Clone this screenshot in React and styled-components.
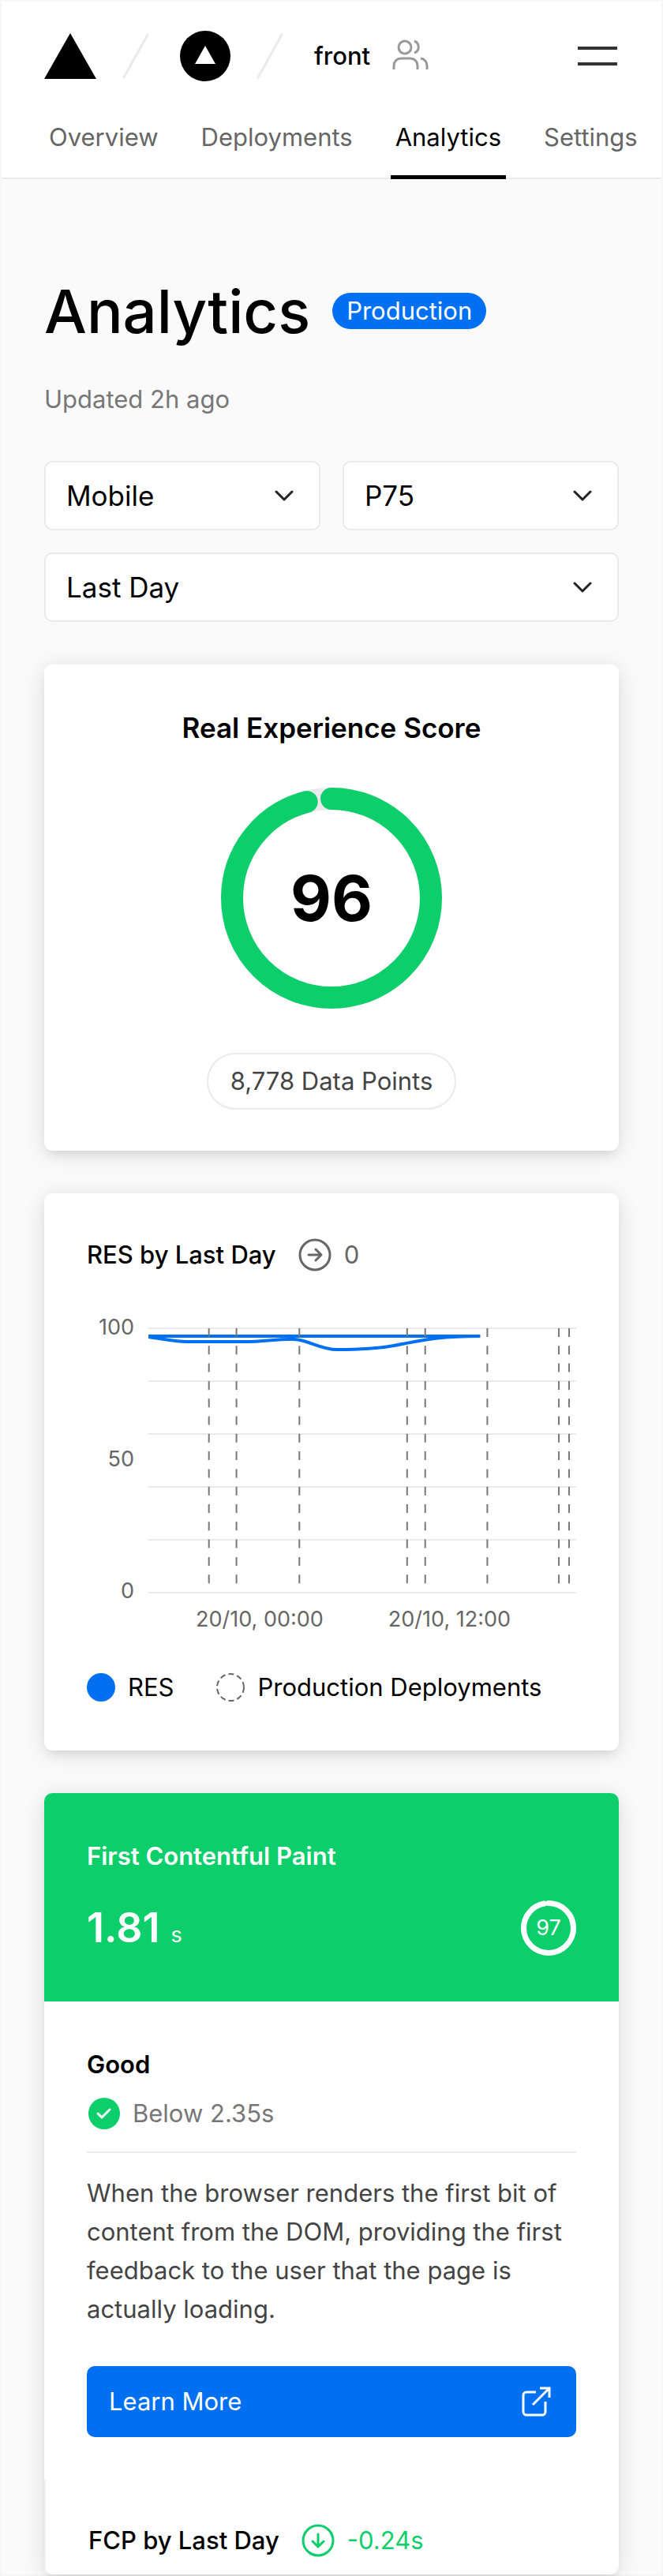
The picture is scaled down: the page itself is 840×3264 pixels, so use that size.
import React from "react";
import styled, { createGlobalStyle } from "styled-components";

const colors = {
  ink: "#000",
  text: "#444",
  muted: "#777",
  line: "#eaeaea",
  canvas: "#fafafa",
  blue: "#0070f3",
  green: "#0cce6b",
};

const GlobalStyle = createGlobalStyle`
  *, *::before, *::after { box-sizing: border-box; }
  body {
    margin: 0;
    background: ${colors.canvas};
    color: ${colors.ink};
    font-family: Inter, "Liberation Sans", sans-serif;
    font-size: 31px;
    line-height: 40px;
  }
  h1, h2, h3, p { margin: 0; font-size: inherit; font-weight: inherit; }
  svg { display: block; flex: none; }
`;

const Page = styled.div`
  border: 2px solid #f6f6f6;
  background: ${colors.canvas};
`;

const Header = styled.header`
  background: #fff;
`;

const Bar = styled.div`
  display: flex;
  align-items: center;
  height: 138px;
  padding: 0 56px 0 54px;
`;

const Crumb = styled.a`
  display: flex;
  align-items: center;
  gap: 28px;
  color: inherit;
  font-weight: 500;
  text-decoration: none;
`;

const Slash = styled.svg`
  margin: 0 38px 0 32px;
`;

const MenuButton = styled.button`
  display: flex;
  flex-direction: column;
  gap: 16px;
  width: 50px;
  margin-left: auto;
  padding: 0;
  border: 0;
  background: none;

  span {
    height: 4px;
    background: #333;
  }
`;

const Tabs = styled.nav`
  display: flex;
  gap: 42px;
  padding: 0 54px;
  overflow: hidden;
  box-shadow: inset 0 -2px ${colors.line};
`;

const Tab = styled.a`
  flex: none;
  padding: 14px 6px 28px;
  border-bottom: 5px solid ${(p) => (p.$active ? colors.ink : "transparent")};
  color: ${(p) => (p.$active ? colors.ink : "#666")};
  text-decoration: none;
`;

const Main = styled.main`
  padding: 111px 54px 0;
`;

const TitleRow = styled.div`
  display: flex;
  align-items: center;
  gap: 28px;
`;

const Title = styled.h1`
  font-size: 76px;
  font-weight: 500;
  line-height: 112px;
`;

const Badge = styled.span`
  padding: 0 18px;
  border-radius: 24px;
  background: ${colors.blue};
  color: #fff;
  line-height: 46px;
`;

const Updated = styled.p`
  margin-top: 36px;
  color: ${colors.muted};
`;

const Filters = styled.div`
  display: grid;
  grid-template-columns: 1fr 1fr;
  gap: 28px;
  margin-top: 58px;
`;

const Field = styled.label`
  display: grid;
  align-items: center;
  grid-column: ${(p) => (p.$wide ? "1 / -1" : "auto")};

  > * { grid-area: 1 / 1; }
  svg {
    justify-self: end;
    margin-right: 34px;
    pointer-events: none;
  }
`;

const Select = styled.select`
  width: 100%;
  height: 88px;
  padding: 0 26px;
  border: 2px solid ${colors.line};
  border-radius: 10px;
  background: #fff;
  color: ${colors.ink};
  font: inherit;
  font-size: 35px;
  appearance: none;
`;

const Card = styled.section`
  margin-top: 54px;
  border-radius: 10px;
  background: #fff;
  box-shadow: 0 4px 28px rgba(0, 0, 0, 0.12), 0 8px 12px -4px rgba(0, 0, 0, 0.08);
`;

const ScoreCard = styled(Card)`
  display: flex;
  flex-direction: column;
  align-items: center;
  padding: 56px 54px 52px;
`;

const ScoreTitle = styled.h2`
  font-size: 35px;
  font-weight: 600;
  line-height: 48px;
`;

const Gauge = styled.div`
  display: grid;
  place-items: center;
  margin: ${(p) => (p.$large ? "52px 0 56px" : "0")};
  font-size: ${(p) => (p.$large ? 80 : 27)}px;
  font-weight: ${(p) => (p.$large ? 700 : 400)};

  > * { grid-area: 1 / 1; }
`;

const Pill = styled.span`
  padding: 14px 28px;
  border: 2px solid ${colors.line};
  border-radius: 36px;
  color: ${colors.text};
`;

const ChartCard = styled(Card)`
  padding: 54px 54px 60px;
`;

const ChartHead = styled.div`
  display: flex;
  align-items: center;
  height: 48px;

  h2 { font-weight: 500; }
  svg { margin-left: 28px; }
`;

const Delta = styled.span`
  margin-left: 16px;
  color: ${(p) => (p.$good ? colors.green : "#666")};
`;

const Chart = styled.div`
  display: grid;
  grid-template-columns: 60px 1fr;
  column-gap: 18px;
  margin-top: 50px;
  color: #666;
  font-size: 27px;
  line-height: 36px;
`;

const YAxis = styled.div`
  display: flex;
  flex-direction: column;
  justify-content: space-between;
  height: 370px;
  text-align: right;
`;

const Plot = styled.svg`
  width: 100%;
  height: 340px;
  margin-top: 18px;
`;

const XAxis = styled.div`
  display: flex;
  grid-column: 2;
  gap: 82px;
  padding-left: 60px;
`;

const Legend = styled.div`
  display: flex;
  gap: 54px;
  margin-top: 48px;
`;

const Key = styled.span`
  display: flex;
  align-items: center;
  gap: 16px;
`;

const Vital = styled.div`
  padding: 60px 54px 58px;
  border-radius: 10px 10px 0 0;
  background: ${colors.green};
  color: #fff;

  h2 { font-weight: 600; }
`;

const VitalRow = styled.div`
  display: flex;
  align-items: center;
  justify-content: space-between;
  margin-top: 36px;
`;

const Reading = styled.div`
  display: flex;
  align-items: baseline;
  gap: 14px;
  height: 70px;
  font-size: 52px;
  font-weight: 600;
  line-height: 70px;

  small {
    font-size: 27px;
    font-weight: 400;
    line-height: 40px;
  }
`;

const Detail = styled.div`
  padding: 60px 54px 54px;

  h3 { font-weight: 600; }
`;

const Threshold = styled.div`
  display: flex;
  align-items: center;
  gap: 16px;
  padding: 22px 2px 28px;
  border-bottom: 2px solid ${colors.line};
  color: ${colors.muted};
`;

const Description = styled.p`
  margin-top: 26px;
  color: ${colors.text};
  line-height: 49px;
`;

const LearnMore = styled.a`
  display: flex;
  align-items: center;
  justify-content: space-between;
  height: 90px;
  margin-top: 48px;
  padding: 0 32px 0 28px;
  border-radius: 10px;
  background: ${colors.blue};
  color: #fff;
  text-decoration: none;
`;

const Trend = styled.div`
  padding: 53px 54px 19px;
  border-left: 2px solid #efefef;
`;

const Chevron = () => (
  <svg width="24" height="16" viewBox="0 0 24 16" fill="none" stroke="#222" strokeWidth="3" strokeLinecap="round" strokeLinejoin="round" aria-hidden="true">
    <path d="M2 3l10 10L22 3" />
  </svg>
);

const Separator = () => (
  <Slash width="36" height="58" viewBox="0 0 36 58" stroke="#eaeaea" strokeWidth="3" strokeLinecap="round" aria-hidden="true">
    <path d="M3 56L33 2" />
  </Slash>
);

const CircleArrow = ({ down, color }) => (
  <svg width="42" height="42" viewBox="0 0 42 42" fill="none" stroke={color} strokeWidth="3" strokeLinecap="round" strokeLinejoin="round" aria-hidden="true">
    <circle cx="21" cy="21" r="19" />
    <path d="M13 21h16M22 14l7 7-7 7" transform={down ? "rotate(90 21 21)" : undefined} />
  </svg>
);

function Ring({ size, stroke, value, color, track }) {
  const r = (size - stroke) / 2;
  return (
    <svg width={size} height={size} viewBox={`0 0 ${size} ${size}`} fill="none" strokeWidth={stroke} aria-hidden="true">
      <circle cx={size / 2} cy={size / 2} r={r} stroke={track} />
      <circle
        cx={size / 2}
        cy={size / 2}
        r={r}
        stroke={color}
        strokeLinecap="round"
        pathLength="100"
        strokeDasharray={`${value} 100`}
        transform={`rotate(-90 ${size / 2} ${size / 2})`}
      />
    </svg>
  );
}

function Picker({ label, value, wide }) {
  return (
    <Field $wide={wide}>
      <Select aria-label={label} defaultValue={value}>
        <option>{value}</option>
      </Select>
      <Chevron />
    </Field>
  );
}

const tabs = ["Overview", "Deployments", "Analytics", "Settings"];
const gridLines = [1, 68, 135, 202, 269, 336];
const deployments = [77, 112, 192, 329, 352, 431, 522, 535];

export default function App() {
  return (
    <>
      <GlobalStyle />
      <Page>
        <Header>
          <Bar>
            <Crumb href="#home" aria-label="Home">
              <svg width="66" height="58" viewBox="0 0 66 58"><path d="M33 0l33 58H0z" /></svg>
            </Crumb>
            <Separator />
            <Crumb href="#team" aria-label="Team">
              <svg width="64" height="64" viewBox="0 0 64 64">
                <circle cx="32" cy="32" r="32" />
                <path d="M32 19l13 23H19z" fill="#fff" />
              </svg>
            </Crumb>
            <Separator />
            <Crumb href="#project">
              front
              <svg width="46" height="44" viewBox="0 0 46 44" fill="none" stroke="#999" strokeWidth="3" aria-hidden="true">
                <circle cx="16" cy="11" r="8" />
                <path d="M2 39v-5a9 9 0 0 1 9-9h12a9 9 0 0 1 9 9v5M36 25a9 9 0 0 1 8 9v5M28 3a8 8 0 0 1 0 15" />
              </svg>
            </Crumb>
            <MenuButton type="button" aria-label="Menu"><span /><span /></MenuButton>
          </Bar>
          <Tabs>
            {tabs.map((tab) => (
              <Tab key={tab} href={`#${tab.toLowerCase()}`} $active={tab === "Analytics"}>{tab}</Tab>
            ))}
          </Tabs>
        </Header>

        <Main>
          <TitleRow>
            <Title>Analytics</Title>
            <Badge>Production</Badge>
          </TitleRow>
          <Updated>Updated 2h ago</Updated>

          <Filters>
            <Picker label="Device" value="Mobile" />
            <Picker label="Percentile" value="P75" />
            <Picker label="Period" value="Last Day" wide />
          </Filters>

          <ScoreCard>
            <ScoreTitle>Real Experience Score</ScoreTitle>
            <Gauge $large>
              <Ring size={280} stroke={28} value={96} color={colors.green} track={colors.line} />
              <span>96</span>
            </Gauge>
            <Pill>8,778 Data Points</Pill>
          </ScoreCard>

          <ChartCard>
            <ChartHead>
              <h2>RES by Last Day</h2>
              <CircleArrow color="#666" />
              <Delta>0</Delta>
            </ChartHead>
            <Chart>
              <YAxis><span>100</span><span>50</span><span>0</span></YAxis>
              <Plot viewBox="0 0 544 340" preserveAspectRatio="none" fill="none" role="img" aria-label="Real Experience Score over the last day">
                {gridLines.map((y) => (
                  <path key={y} d={`M0 ${y}H544`} stroke={colors.line} strokeWidth="2" />
                ))}
                <path d="M0 11H422M0 12C16 14 30 18 50 18H120C150 18 165 14 185 15C205 16 218 28 240 28C268 28 290 27 312 23C345 17 365 11 422 11" stroke={colors.blue} strokeWidth="4" />
                {deployments.map((x) => (
                  <path key={x} d={`M${x} 1V325`} stroke="#777" strokeWidth="2" strokeDasharray="11 11.3" />
                ))}
              </Plot>
              <XAxis><span>20/10, 00:00</span><span>20/10, 12:00</span></XAxis>
            </Chart>
            <Legend>
              <Key>
                <svg width="36" height="36" viewBox="0 0 36 36" aria-hidden="true"><circle cx="18" cy="18" r="18" fill={colors.blue} /></svg>
                RES
              </Key>
              <Key>
                <svg width="36" height="36" viewBox="0 0 36 36" fill="none" aria-hidden="true">
                  <circle cx="18" cy="18" r="17" stroke="#666" strokeWidth="2" strokeDasharray="7 4" />
                </svg>
                Production Deployments
              </Key>
            </Legend>
          </ChartCard>

          <Card>
            <Vital>
              <h2>First Contentful Paint</h2>
              <VitalRow>
                <Reading>1.81<small>s</small></Reading>
                <Gauge>
                  <Ring size={70} stroke={7} value={97} color="#fff" track="rgba(255, 255, 255, 0.2)" />
                  <span>97</span>
                </Gauge>
              </VitalRow>
            </Vital>
            <Detail>
              <h3>Good</h3>
              <Threshold>
                <svg width="40" height="40" viewBox="0 0 40 40" aria-hidden="true">
                  <circle cx="20" cy="20" r="20" fill={colors.green} />
                  <path d="M12 20l5 5 10-10" fill="none" stroke="#fff" strokeWidth="3" strokeLinecap="round" strokeLinejoin="round" />
                </svg>
                Below 2.35s
              </Threshold>
              <Description>
                When the browser renders the first bit of content from the DOM, providing the first feedback to the user that the page is actually loading.
              </Description>
              <LearnMore href="#learn-more">
                Learn More
                <svg width="38" height="38" viewBox="0 0 38 38" fill="none" stroke="#fff" strokeWidth="3" aria-hidden="true">
                  <path d="M19 7H7a4 4 0 0 0-4 4v21a4 4 0 0 0 4 4h20a4 4 0 0 0 4-4V19M24 2h12v12M15 23L36 2" />
                </svg>
              </LearnMore>
            </Detail>
            <Trend>
              <ChartHead>
                <h2>FCP by Last Day</h2>
                <CircleArrow down color={colors.green} />
                <Delta $good>-0.24s</Delta>
              </ChartHead>
            </Trend>
          </Card>
        </Main>
      </Page>
    </>
  );
}
